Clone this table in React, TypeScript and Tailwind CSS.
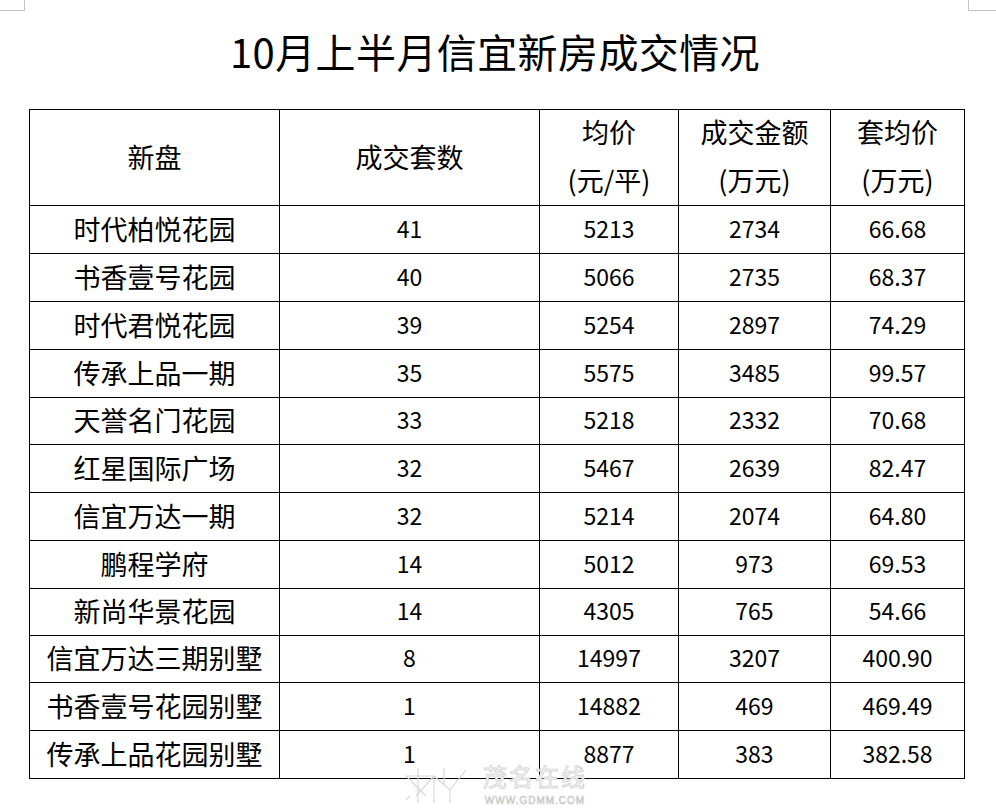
import React from "react";

const rows = [
  { name: "时代柏悦花园", units: "41", price: "5213", total: "2734", avg: "66.68", h: "h-[48px]" },
  { name: "书香壹号花园", units: "40", price: "5066", total: "2735", avg: "68.37", h: "h-[48px]" },
  { name: "时代君悦花园", units: "39", price: "5254", total: "2897", avg: "74.29", h: "h-[48px]" },
  { name: "传承上品一期", units: "35", price: "5575", total: "3485", avg: "99.57", h: "h-[48px]" },
  { name: "天誉名门花园", units: "33", price: "5218", total: "2332", avg: "70.68", h: "h-[47px]" },
  { name: "红星国际广场", units: "32", price: "5467", total: "2639", avg: "82.47", h: "h-[48px]" },
  { name: "信宜万达一期", units: "32", price: "5214", total: "2074", avg: "64.80", h: "h-[48px]" },
  { name: "鹏程学府", units: "14", price: "5012", total: "973", avg: "69.53", h: "h-[48px]" },
  { name: "新尚华景花园", units: "14", price: "4305", total: "765", avg: "54.66", h: "h-[47px]" },
  { name: "信宜万达三期别墅", units: "8", price: "14997", total: "3207", avg: "400.90", h: "h-[47px]" },
  { name: "书香壹号花园别墅", units: "1", price: "14882", total: "469", avg: "469.49", h: "h-[48px]" },
  { name: "传承上品花园别墅", units: "1", price: "8877", total: "383", avg: "382.58", h: "h-[48px]" },
];

const cell = "flex items-center justify-center border-r border-b border-black pb-[3px]";
const cjk = "text-[27px] leading-none";
const num = "text-[23px] leading-none";

const App = () => {
  return (
    <div
      className="relative w-[996px] h-[809px] bg-white text-black overflow-hidden"
      style={{ fontFamily: '"Noto Sans CJK SC", "Noto Sans", sans-serif' }}
    >
      {/* page corner marks */}
      <div className="absolute left-0 top-0 w-[25px] h-[11px] border-r border-b border-[#c4c4c4]"></div>
      <div className="absolute right-0 top-0 w-[28px] h-[11px] border-l border-b border-[#c4c4c4]"></div>

      <div className="h-[109px] flex items-center justify-center pb-[8px] pr-[6px]">
        <h1 className="text-[40px] leading-none font-normal tracking-[0.4px]">
          10月上半月信宜新房成交情况
        </h1>
      </div>

      <div className="ml-[29px] w-[936px] border-l border-t border-black grid grid-cols-[250px_260px_139px_152px_134px]">
        <div className={`${cell} h-[96px]`}>
          <span className={cjk}>新盘</span>
        </div>
        <div className={`${cell} h-[96px]`}>
          <span className={cjk}>成交套数</span>
        </div>
        <div className={`${cell} h-[96px] flex-col`}>
          <span className="text-[27px] leading-[48px]">均价</span>
          <span className="text-[27px] leading-[48px]">(元/平)</span>
        </div>
        <div className={`${cell} h-[96px] flex-col`}>
          <span className="text-[27px] leading-[48px]">成交金额</span>
          <span className="text-[27px] leading-[48px]">(万元)</span>
        </div>
        <div className={`${cell} h-[96px] flex-col`}>
          <span className="text-[27px] leading-[48px]">套均价</span>
          <span className="text-[27px] leading-[48px]">(万元)</span>
        </div>

        {rows.map((r) => (
          <React.Fragment key={r.name}>
            <div className={`${cell} ${r.h}`}>
              <span className={cjk}>{r.name}</span>
            </div>
            <div className={`${cell} ${r.h}`}>
              <span className={num}>{r.units}</span>
            </div>
            <div className={`${cell} ${r.h}`}>
              <span className={num}>{r.price}</span>
            </div>
            <div className={`${cell} ${r.h}`}>
              <span className={num}>{r.total}</span>
            </div>
            <div className={`${cell} ${r.h}`}>
              <span className={num}>{r.avg}</span>
            </div>
          </React.Fragment>
        ))}
      </div>

      {/* watermark */}
      <div className="absolute left-[404px] top-[765px] flex items-start gap-[13px] pointer-events-none">
        <svg width="66" height="39" viewBox="0 0 66 39" fill="none" stroke="#d8d8d8" strokeWidth="1.2">
          <path d="M2 11 L30 11 M30 11 L30 38 M14 3 L14 38 M2 11 L22 31 M30 11 L12 31 M30 11 L46 25 L62 5 M46 25 L46 38 M40 3 L40 21 M2 35 L6 31" />
        </svg>
        <div className="flex flex-col items-center">
          <div
            className="text-[24px] leading-[22px] text-white [-webkit-text-stroke:1px_#d8d8d8] tracking-[2px]"
            style={{ fontFamily: '"Noto Sans CJK SC", sans-serif' }}
          >
            茂名在线
          </div>
          <div
            className="mt-[9px] text-[10px] leading-[10px] text-white [-webkit-text-stroke:0.6px_#c4c4c4] tracking-[1px]"
            style={{ fontFamily: '"Liberation Sans", sans-serif' }}
          >
            WWW.GDMM.COM
          </div>
        </div>
      </div>
    </div>
  );
};

export default App;
